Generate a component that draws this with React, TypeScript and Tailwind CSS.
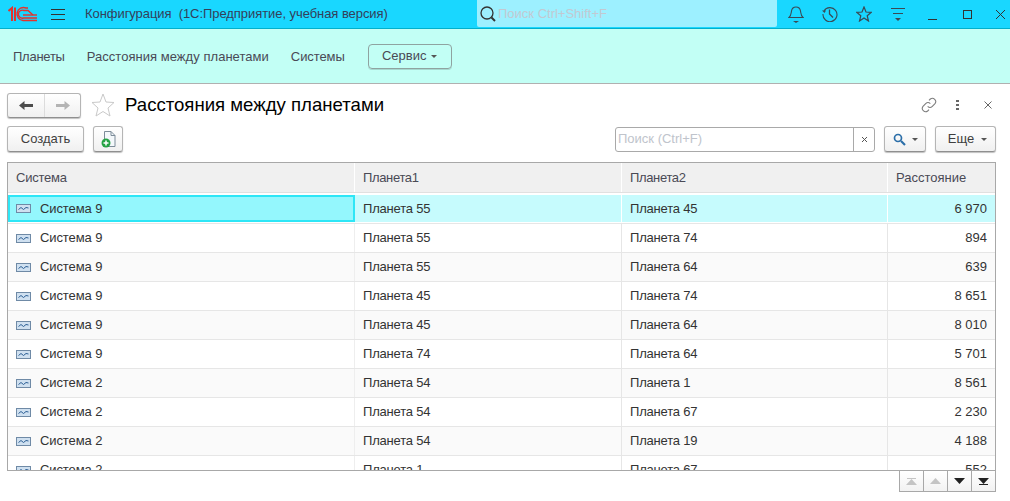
import React from 'react'

const rows = [
  ['Система 9', 'Планета 55', 'Планета 45', '6 970'],
  ['Система 9', 'Планета 55', 'Планета 74', '894'],
  ['Система 9', 'Планета 55', 'Планета 64', '639'],
  ['Система 9', 'Планета 45', 'Планета 74', '8 651'],
  ['Система 9', 'Планета 45', 'Планета 64', '8 010'],
  ['Система 9', 'Планета 74', 'Планета 64', '5 701'],
  ['Система 2', 'Планета 54', 'Планета 1', '8 561'],
  ['Система 2', 'Планета 54', 'Планета 67', '2 230'],
  ['Система 2', 'Планета 54', 'Планета 19', '4 188'],
  ['Система 2', 'Планета 1', 'Планета 67', '552'],
]

const btn =
  'flex items-center justify-center rounded-[3px] border border-[#b5b5b5] border-b-[#8f8f8f] bg-gradient-to-b from-white to-[#f0f0f0] shadow-[0_1px_1px_rgba(0,0,0,0.25)]'

const Logo = () => (
  <svg width="30" height="16" viewBox="0 0 30 16" fill="none" stroke="#e4332d">
    <path d="M0.500 5 L4 2 V15 M7 1.500 V15" strokeWidth="2" />
    <path d="M29 14.500 H15 A6.500 6.500 0 1 1 18 2 H20" strokeWidth="1.400" />
    <path d="M29 12 H15.500 A4 4 0 1 1 16 4.500 H20 L25 9" strokeWidth="1.400" />
    <path d="M15 9 H29" strokeWidth="1.400" />
  </svg>
)

const Caret = ({ color = '#555' }: { color?: string }) => (
  <svg width="6" height="3" viewBox="0 0 6 3">
    <path d="M0 0H6L3 3Z" fill={color} />
  </svg>
)

const RowIcon = () => (
  <svg width="15" height="9" viewBox="0 0 15 9" className="shrink-0">
    <rect x="0.500" y="0.500" width="14" height="8" fill="#cfe0f0" stroke="#6f8aa6" />
    <path d="M2.500 5.500 L5 3.500 L7.500 5.500 L10 3.500 L12.500 4" fill="none" stroke="#2c5f95" />
  </svg>
)

const Cell = ({ children, width, right, bg, last, line = 'border-[#e6e6e6]' }: { children: React.ReactNode; width: string; right?: boolean; bg?: string; last?: boolean; line?: string }) => (
  <div className={`${width} ${bg ?? ''} ${last ? '' : `border-r ${line}`} ${right ? 'justify-end pr-2' : 'pl-2'} flex h-full shrink-0 items-center`}>
    {children}
  </div>
)

export default function App() {
  return (
    <div className="flex h-[501px] w-[1010px] flex-col overflow-hidden bg-white font-['Liberation_Sans',Arial,sans-serif] text-[13px] text-[#3f3f3f]">
      {/* верхняя панель */}
      <div className="flex h-[29px] shrink-0 items-center overflow-hidden border-b border-[#00b0cc] bg-[#19d7ff]">
        <div className="ml-2 flex w-[30px] shrink-0 items-center">
          <Logo />
        </div>
        <div className="ml-[13px] flex w-[14px] shrink-0 flex-col gap-[4px]">
          <span className="h-[1px] bg-[#333]" />
          <span className="h-[1px] bg-[#333]" />
          <span className="h-[1px] bg-[#333]" />
        </div>
        <div className="ml-[20px] w-[392px] shrink-0 whitespace-pre tracking-[-0.06px] text-[#34405a]">Конфигурация  (1С:Предприятие, учебная версия)</div>
        <div className="flex h-[27px] w-[300px] shrink-0 items-center self-start rounded-b-[2px] bg-[#9df0ff]">
          <svg width="18" height="18" viewBox="0 0 18 18" fill="none" stroke="#333" className="ml-[2px]">
            <circle cx="8" cy="8" r="6" strokeWidth="1.300" />
            <path d="M12.500 12.500 L16 16" strokeWidth="2" />
          </svg>
          <span className="ml-[1px] text-[#c2c9d2]">Поиск Ctrl+Shift+F</span>
        </div>
        <div className="ml-[2px] flex shrink-0 items-center text-[#444]">
          <div className="flex w-[34px] justify-center">
            <svg width="16" height="18" viewBox="0 0 16 18" fill="none" stroke="#3a4a55" strokeWidth="1.100">
              <path d="M1 12.500 C3 11 3 9 3.500 6 C4 3 6 2 8 2 C10 2 12 3 12.500 6 C13 9 13 11 15 12.500 Z" />
              <path d="M5 16H11L8 18Z" fill="#3a4a55" stroke="none" />
            </svg>
          </div>
          <div className="flex w-[34px] justify-center">
            <svg width="16" height="16" viewBox="0 0 16 16" fill="none" stroke="#3a4a55" strokeWidth="1.100">
              <path d="M2 5 A7 7 0 1 1 1 8" />
              <path d="M0 4.500H4L2.500 7Z" fill="#3a4a55" stroke="none" />
              <path d="M7.500 3.500V8L11 11.500" strokeWidth="1.300" />
            </svg>
          </div>
          <div className="flex w-[34px] justify-center">
            <svg width="16" height="16" viewBox="0 0 16 16" fill="none" stroke="#3a4a55" strokeWidth="1.200">
              <path d="M8 1 L10 6 L15.300 6.300 L11.200 9.700 L12.500 15 L8 12 L3.500 15 L4.800 9.700 L0.700 6.300 L6 6Z" />
            </svg>
          </div>
          <div className="flex w-[34px] justify-center">
            <div className="flex w-[14px] flex-col items-center gap-[4px]">
              <span className="h-[1px] w-full bg-[#3a4a55]" />
              <span className="h-[1px] w-[10px] bg-[#3a4a55]" />
              <Caret color="#3a4a55" />
            </div>
          </div>
          <div className="flex w-[35px] justify-center">
            <span className="mt-[10px] h-[1px] w-[9px] bg-[#333]" />
          </div>
          <div className="flex w-[34px] justify-center">
            <span className="h-[9px] w-[9px] border border-[#333]" />
          </div>
          <div className="flex w-[32px] justify-center">
            <svg width="11" height="11" viewBox="0 0 11 11" stroke="#333">
              <path d="M1 1L10 10M10 1L1 10" />
            </svg>
          </div>
        </div>
      </div>

      {/* панель разделов */}
      <div className="flex h-[55px] shrink-0 items-center border-b border-[#b0b0b0] bg-[#c2fff5] pl-[13px] text-[#4a4a55]">
        <span className="mt-[2px] tracking-[-0.25px]">Планеты</span>
        <span className="ml-[22px] mt-[2px] tracking-[0.04px]">Расстояния между планетами</span>
        <span className="ml-[22px] mt-[2px] tracking-[-0.1px]">Системы</span>
        <div className="ml-[23px] flex h-[25px] w-[84px] items-center justify-center gap-[5px] rounded-[4px] border border-[#8fa3a0] shadow-[0_1px_0_rgba(0,0,0,0.15)]">
          <span>Сервис</span>
          <Caret />
        </div>
      </div>

      {/* заголовок формы */}
      <div className="flex h-[42px] shrink-0 items-center pl-[7px] pr-[18px]">
        <div className={`${btn} h-[25px] w-[74px]`}>
          <div className="flex h-full w-[37px] items-center justify-center border-r border-[#dcdcdc]">
            <svg width="15" height="9" viewBox="0 0 15 9"><path d="M0 4.500L5.500 0V3H14V6H5.500V9Z" fill="#4d4d4d" /></svg>
          </div>
          <div className="flex h-full flex-1 items-center justify-center">
            <svg width="15" height="9" viewBox="0 0 15 9"><path d="M15 4.500L9.500 0V3H1V6H9.500V9Z" fill="#b4b4b4" /></svg>
          </div>
        </div>
        <svg width="24" height="24" viewBox="0 0 24 24" fill="none" stroke="#c9c9c9" className="ml-[10px]">
          <path d="M12 1 L15 9 L23 9.500 L17 15 L19 23 L12 18.500 L5 23 L7 15 L1 9.500 L9 9Z" />
        </svg>
        <div className="ml-[10px] text-[18.600px] text-black">Расстояния между планетами</div>
        <svg width="16" height="16" viewBox="0 0 24 24" fill="none" stroke="#7d7d7d" strokeWidth="1.600" className="ml-auto">
          <path d="M10 14a5 5 0 0 0 7 0l4-4a5 5 0 0 0-7-7l-2 2" />
          <path d="M14 10a5 5 0 0 0-7 0l-4 4a5 5 0 0 0 7 7l2-2" />
        </svg>
        <div className="ml-[19px] flex flex-col gap-[2px]">
          <span className="h-[2px] w-[3px] bg-[#666]" />
          <span className="h-[2px] w-[3px] bg-[#666]" />
          <span className="h-[2px] w-[3px] bg-[#666]" />
        </div>
        <svg width="8" height="8" viewBox="0 0 8 8" stroke="#666" className="ml-[25px]">
          <path d="M0.500 0.500L7.500 7.500M7.500 0.500L0.500 7.500" />
        </svg>
      </div>

      {/* командная панель */}
      <div className="flex h-[26px] shrink-0 items-center pl-[7px]">
        <div className={`${btn} h-[26px] w-[77px]`}>Создать</div>
        <div className={`${btn} ml-[9px] h-[26px] w-[30px]`}>
          <svg width="15" height="17" viewBox="0 0 15 17">
            <path d="M3.500 0.500H10L14 4.500V15.500H3.500Z" fill="#f4f8fb" stroke="#7d8c99" />
            <path d="M10 0.500V4.500H14" fill="none" stroke="#7d8c99" />
            <circle cx="5" cy="12" r="4.500" fill="#25a244" />
            <path d="M2.500 12H7.500M5 9.500V14.500" stroke="#fff" strokeWidth="1.500" />
          </svg>
        </div>
        <div className="ml-[492px] flex h-[25px] w-[260px] items-center rounded-[3px] border border-[#a9a9a9]">
          <span className="flex-1 pl-[2px] text-[#c0c4cc]">Поиск (Ctrl+F)</span>
          <div className="flex h-full w-[21px] items-center justify-center border-l border-[#a9a9a9]">
            <svg width="7" height="7" viewBox="0 0 7 7" stroke="#555"><path d="M1 1L6 6M6 1L1 6" /></svg>
          </div>
        </div>
        <div className={`${btn} ml-[9px] h-[26px] w-[42px] gap-[6px]`}>
          <svg width="13" height="13" viewBox="0 0 13 13" fill="none" stroke="#2b6ea8">
            <circle cx="5" cy="5" r="3.500" strokeWidth="1.700" />
            <path d="M8 8L12 12" strokeWidth="2.200" />
          </svg>
          <Caret />
        </div>
        <div className={`${btn} ml-[9px] h-[26px] w-[61px] gap-[7px] pl-[4px]`}>
          <span>Еще</span>
          <Caret />
        </div>
      </div>

      {/* таблица */}
      <div className="mx-[7px] mt-[10px] h-[308px] w-[989px] shrink-0 overflow-hidden border border-b-0 border-[#a8a8a8]">
        <div className="flex h-[30px] items-center border-b border-[#e0e0e0] bg-[#f0f0f0] text-[#4a4a55]">
          <Cell width="w-[347px]" line="border-white"><span className="tracking-[-0.25px]">Система</span></Cell>
          <Cell width="w-[267px]" line="border-white"><span className="tracking-[-0.35px]">Планета1</span></Cell>
          <Cell width="w-[266px]" line="border-white"><span className="tracking-[-0.35px]">Планета2</span></Cell>
          <Cell width="w-[107px]" last>Расстояние</Cell>
        </div>
        {rows.map((row, i) => (
          <div key={i} className={`flex h-[29px] items-center border-b border-[#e6e6e6] text-[#333] ${i === 0 ? 'mt-[2px] bg-white pb-[1px]' : i % 2 === 0 ? 'bg-[#fafafa]' : 'bg-white'}`}>
            <div className={`flex h-full w-[347px] shrink-0 items-center gap-[9px] ${i === 0 ? 'border-2 border-[#2ee6f6] bg-[#94f7fd] pl-[6px]' : 'border-r border-[#eeeeee] pl-2'}`}>
              <RowIcon />
              <span className="tracking-[-0.1px]">{row[0]}</span>
            </div>
            <Cell width="w-[267px]" bg={i === 0 ? 'bg-[#c6fbfd]' : ''} line={i === 0 ? 'border-white' : undefined}><span className="tracking-[-0.2px]">{row[1]}</span></Cell>
            <Cell width="w-[266px]" bg={i === 0 ? 'bg-[#c6fbfd]' : ''} line={i === 0 ? 'border-white' : undefined}><span className="tracking-[-0.2px]">{row[2]}</span></Cell>
            <Cell width="w-[107px]" right last bg={i === 0 ? 'bg-[#c6fbfd]' : ''}>{row[3]}</Cell>
          </div>
        ))}
      </div>

      {/* навигация по списку */}
      <div className="mx-[7px] flex h-[22px] w-[989px] shrink-0 justify-end border-t border-[#a8a8a8]">
        <div className="flex h-full w-[97px] border-x border-b border-[#a8a8a8] bg-gradient-to-b from-white to-[#f2f2f2]">
          <div className="flex flex-1 flex-col items-center justify-center border-r border-[#a8a8a8]">
            <span className="h-[1px] w-[9px] bg-[#c4c4c4]" />
            <svg width="11" height="6" viewBox="0 0 11 6"><path d="M5.500 0L11 6H0Z" fill="#c4c4c4" /></svg>
          </div>
          <div className="flex flex-1 items-center justify-center border-r border-[#a8a8a8]">
            <svg width="11" height="6" viewBox="0 0 11 6"><path d="M5.500 0L11 6H0Z" fill="#c4c4c4" /></svg>
          </div>
          <div className="flex flex-1 items-center justify-center border-r border-[#a8a8a8]">
            <svg width="11" height="6" viewBox="0 0 11 6"><path d="M0 0H11L5.500 6Z" fill="#222" /></svg>
          </div>
          <div className="flex flex-1 flex-col items-center justify-center">
            <svg width="11" height="6" viewBox="0 0 11 6"><path d="M0 0H11L5.500 6Z" fill="#222" /></svg>
            <span className="h-[1px] w-[9px] bg-[#222]" />
          </div>
        </div>
      </div>
    </div>
  )
}
